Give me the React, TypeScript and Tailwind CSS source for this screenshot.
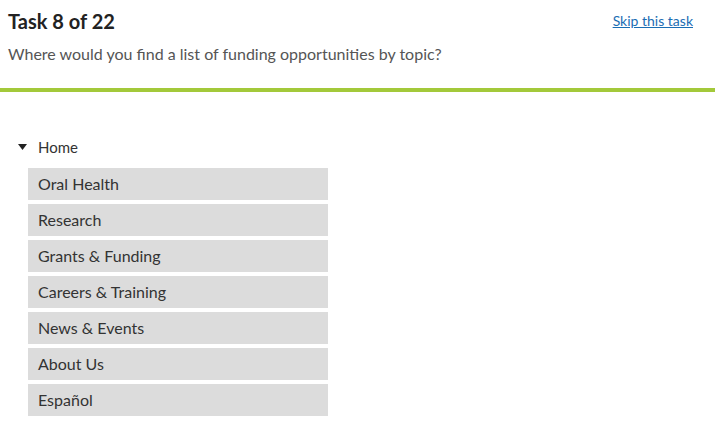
const items = [
  "Oral Health",
  "Research",
  "Grants & Funding",
  "Careers & Training",
  "News & Events",
  "About Us",
  "Español",
];

export default function App() {
  return (
    <div className="w-[715px] h-[424px] bg-white font-['Lato',sans-serif] text-[#333]">
      <div className="flex justify-between items-start px-2 pt-[8px]">
        <div>
          <h1 className="text-[20px] leading-[26px] font-bold text-[#222]">Task 8 of 22</h1>
          <p className="mt-[9px] text-[16px] leading-[21px] text-[#555]">
            Where would you find a list of funding opportunities by topic?
          </p>
        </div>
        <a href="#" className="mr-[14px] mt-[4px] text-[14px] leading-[18px] text-[#1b6db3] underline">
          Skip this task
        </a>
      </div>
      <div className="mt-[24px] h-[4px] bg-[#a3c93a]" />
      <div className="pt-[44px] pl-[18px]">
        <div className="flex items-center h-[22px]">
          <svg width="9" height="6" viewBox="0 0 9 6" className="mr-[11px]">
            <path d="M0 0 H9 L4.5 6 Z" fill="#222" />
          </svg>
          <span className="text-[15px]">Home</span>
        </div>
        <ul className="mt-[10px] ml-[10px] flex flex-col gap-[4px]">
          {items.map((item) => (
            <li
              key={item}
              className="w-[300px] h-[32px] bg-[#dcdcdc] pl-[10px] flex items-center text-[16px]"
            >
              {item}
            </li>
          ))}
        </ul>
      </div>
    </div>
  );
}
